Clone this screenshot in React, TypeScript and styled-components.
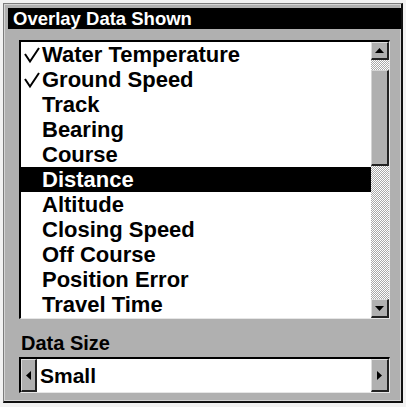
import React from "react";
import styled, { createGlobalStyle } from "styled-components";

const GlobalStyle = createGlobalStyle`
  html, body { margin: 0; padding: 0; background: #f2f2f2; }
  body { font-family: "Liberation Sans", Arial, sans-serif; }
`;

const Panel = styled.div`
  box-sizing: border-box;
  margin: 3px 0 0 3px;
  width: 400px;
  height: 400px;
  background: #b0b0b0;
  border-top: 1px solid #7c7c7c;
  border-left: 1px solid #7c7c7c;
  border-right: 2px solid #111;
  border-bottom: 2px solid #111;
  box-shadow: inset 1px 1px 0 #d4d4d4, inset -1px -1px 0 #d4d4d4;
  display: flex;
  flex-direction: column;
`;

const TitleBar = styled.div`
  margin: 4px 0 0 4px;
  height: 21px;
  background: #000;
  color: #fff;
  font: bold 18.5px/21px "Liberation Sans", Arial, sans-serif;
  padding-left: 5px;
  white-space: nowrap;
`;

const Sunken = styled.div<{ $h: number; $top: number }>`
  box-sizing: border-box;
  margin: ${(p) => p.$top}px 11px 0 15px;
  height: ${(p) => p.$h}px;
  background: #fff;
  border-top: 2px solid #000;
  border-left: 2px solid #000;
  border-right: 1px solid #e6e6e6;
  border-bottom: 1px solid #e6e6e6;
  display: flex;
`;

const Items = styled.div`
  flex: 1;
  display: flex;
  flex-direction: column;
`;

const Row = styled.div<{ $selected?: boolean }>`
  height: 25px;
  display: flex;
  align-items: center;
  background: ${(p) => (p.$selected ? "#000" : "transparent")};
  color: ${(p) => (p.$selected ? "#fff" : "#000")};
  font: bold 22px/25px "Liberation Sans", Arial, sans-serif;
  white-space: nowrap;
`;

const CheckCell = styled.span`
  width: 21px;
  height: 25px;
  flex: none;
  display: flex;
`;

const dotted = `repeating-conic-gradient(#ffffff 0 25%, #a8a8a8 0 50%) 0 0 / 2px 2px`;

const ScrollBar = styled.div`
  width: 18px;
  flex: none;
  display: flex;
  flex-direction: column;
  background: ${dotted};
`;

const ArrowButton = styled.div<{ $w: number; $h: number }>`
  box-sizing: border-box;
  width: ${(p) => p.$w}px;
  height: ${(p) => p.$h}px;
  flex: none;
  background: #b0b0b0;
  border-top: 1px solid #dcdcdc;
  border-left: 1px solid #dcdcdc;
  border-right: 2px solid #222;
  border-bottom: 2px solid #222;
  display: flex;
  align-items: center;
  justify-content: center;
`;

const Gap = styled.div<{ $h: number }>`
  height: ${(p) => p.$h}px;
  flex: none;
`;

const Thumb = styled.div`
  box-sizing: border-box;
  height: 96px;
  flex: none;
  background: #b0b0b0;
  border-top: 1px solid #d4d4d4;
  border-left: 1px solid #d4d4d4;
  border-right: 2px solid #222;
  border-bottom: 2px solid #222;
`;

const Label = styled.div`
  margin: 11px 0 0 17px;
  height: 27px;
  font: bold 20px/27px "Liberation Sans", Arial, sans-serif;
  color: #000;
`;

const Value = styled.div`
  flex: 1;
  padding-left: 3px;
  font: bold 21px/33px "Liberation Sans", Arial, sans-serif;
  color: #000;
`;

const Tri = ({ dir }: { dir: "up" | "down" | "left" | "right" }) => {
  const pts = {
    up: "0,5 9,5 4.5,0",
    down: "0,0 9,0 4.5,5",
    left: "5,0 5,9 0,4.5",
    right: "0,0 0,9 5,4.5",
  }[dir];
  const vertical = dir === "up" || dir === "down";
  return (
    <svg width={vertical ? 9 : 5} height={vertical ? 5 : 9} viewBox={vertical ? "0 0 9 5" : "0 0 5 9"}>
      <polygon points={pts} fill="#000" />
    </svg>
  );
};

const Check = ({ color }: { color: string }) => (
  <svg width="21" height="25" viewBox="0 0 21 25">
    <polyline points="4,12 9,19.5 18,6" fill="none" stroke={color} strokeWidth="2" />
  </svg>
);

const items = [
  { name: "Water Temperature", checked: true },
  { name: "Ground Speed", checked: true },
  { name: "Track" },
  { name: "Bearing" },
  { name: "Course" },
  { name: "Distance", selected: true },
  { name: "Altitude" },
  { name: "Closing Speed" },
  { name: "Off Course" },
  { name: "Position Error" },
  { name: "Travel Time" },
];

export default function App() {
  return (
    <>
      <GlobalStyle />
      <Panel>
        <TitleBar>Overlay Data Shown</TitleBar>
        <Sunken $h={279} $top={11}>
          <Items>
            {items.map((it) => (
              <Row key={it.name} $selected={it.selected}>
                <CheckCell>{it.checked && <Check color={it.selected ? "#fff" : "#000"} />}</CheckCell>
                {it.name}
              </Row>
            ))}
          </Items>
          <ScrollBar>
            <ArrowButton $w={18} $h={18}>
              <Tri dir="up" />
            </ArrowButton>
            <Gap $h={10} />
            <Thumb />
            <Gap $h={133} />
            <ArrowButton $w={18} $h={19}>
              <Tri dir="down" />
            </ArrowButton>
          </ScrollBar>
        </Sunken>
        <Label>Data Size</Label>
        <Sunken $h={36} $top={0}>
          <ArrowButton $w={16} $h={33}>
            <Tri dir="left" />
          </ArrowButton>
          <Value>Small</Value>
          <ArrowButton $w={18} $h={33}>
            <Tri dir="right" />
          </ArrowButton>
        </Sunken>
      </Panel>
    </>
  );
}
